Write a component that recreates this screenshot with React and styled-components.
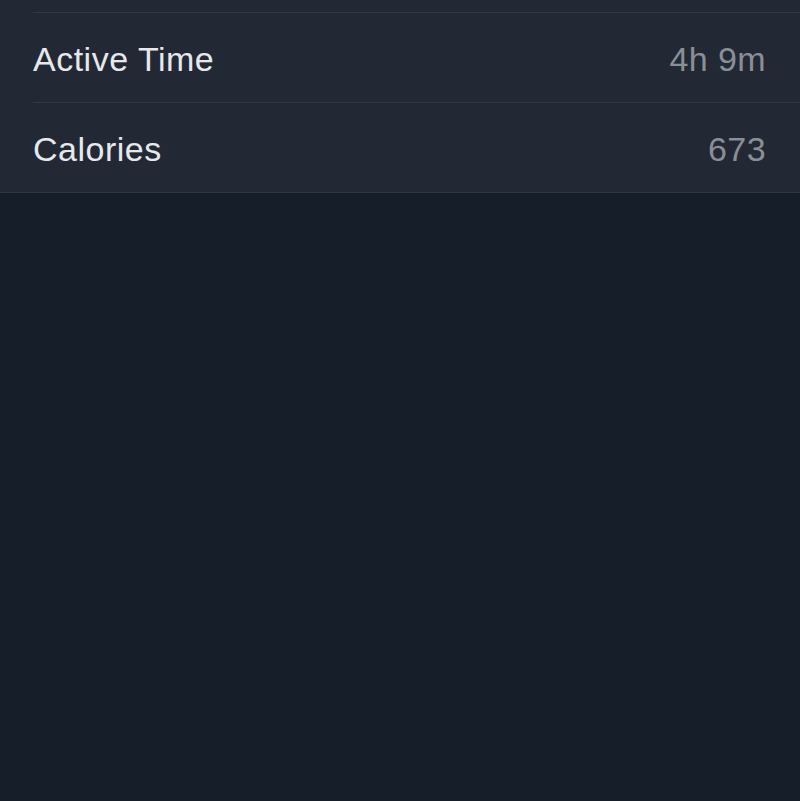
import React from 'react';
import styled, { createGlobalStyle } from 'styled-components';

const GlobalStyle = createGlobalStyle`
  html, body {
    margin: 0;
    padding: 0;
    background: #161e2a;
  }
  body {
    font-family: "Liberation Sans", Arial, sans-serif;
    -webkit-font-smoothing: antialiased;
  }
`;

const Screen = styled.div`
  width: 100%;
  min-height: 801px;
  background: #161e2a;
`;

const List = styled.ul`
  margin: 0;
  padding: 12px 0 0 33px;
  list-style: none;
  background: #222935;
  border-bottom: 1px solid #2e3642;
`;

const Row = styled.li`
  height: 89px;
  display: flex;
  justify-content: space-between;
  align-items: center;
  padding-right: 34px;
  border-top: 1px solid #303845;
`;

const Label = styled.span`
  color: #e6e8eb;
  font-size: 34px;
  letter-spacing: 0.5px;
  padding-top: 4px;
`;

const Value = styled.span`
  color: #8a8f96;
  font-size: 34px;
  letter-spacing: 0.4px;
  padding-top: 4px;
`;

const rows = [
  { label: 'Active Time', value: '4h 9m' },
  { label: 'Calories', value: '673' },
];

export default function App() {
  return (
    <Screen>
      <GlobalStyle />
      <List>
        {rows.map((r) => (
          <Row key={r.label}>
            <Label>{r.label}</Label>
            <Value>{r.value}</Value>
          </Row>
        ))}
      </List>
    </Screen>
  );
}
